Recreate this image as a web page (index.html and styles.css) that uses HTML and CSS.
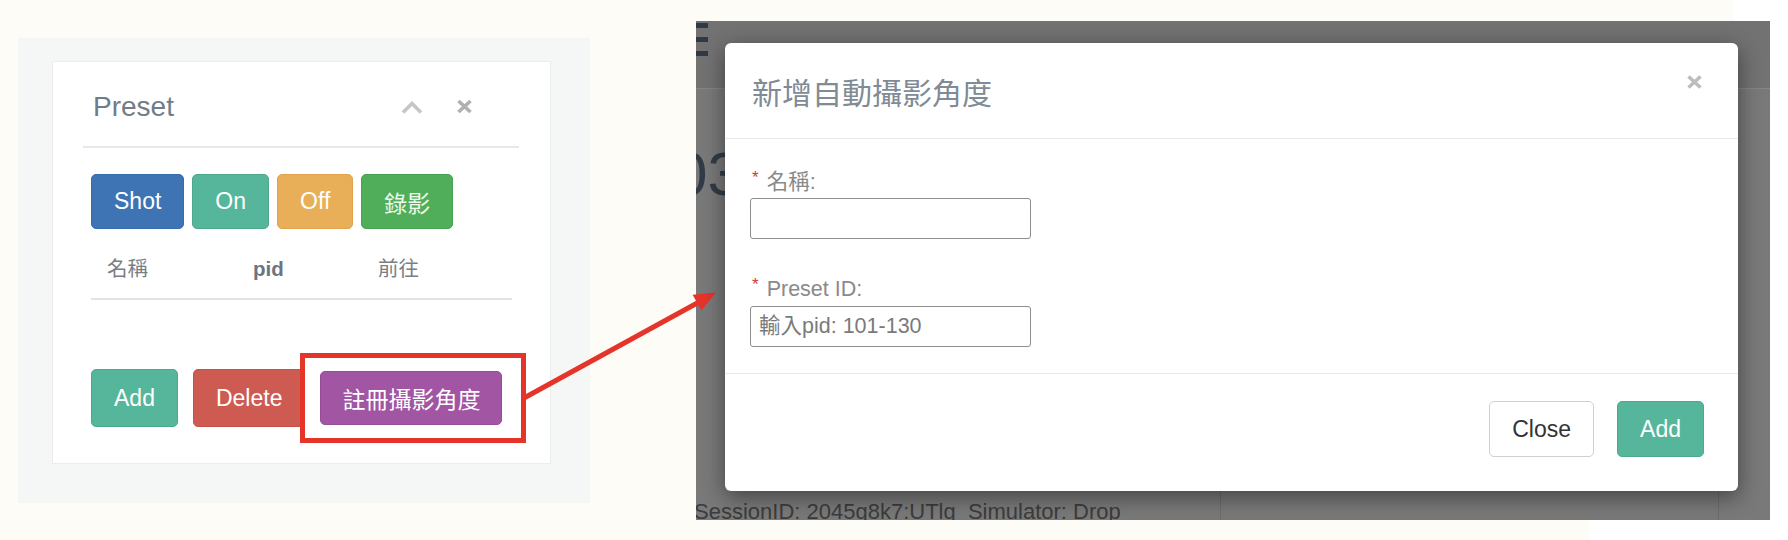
FILE: index.html
```html
<!DOCTYPE html>
<html lang="zh-Hant">
<head>
<meta charset="utf-8">
<title>Preset</title>
<link rel="stylesheet" href="styles.css">
</head>
<body>
<div class="page">
  <section class="panel">
    <div class="card">
      <div class="card-head">
        <h2 class="card-title">Preset</h2>
        <div class="card-tools">
          <svg class="ic-chev" width="22" height="13" viewBox="0 0 22 13"><polyline points="2,11.5 11,2.5 20,11.5" fill="none" stroke="#c6c6c6" stroke-width="3.6"/></svg>
          <svg class="ic-x" width="17" height="15" viewBox="0 0 17 15"><path d="M2.5 2 L14.5 13 M14.5 2 L2.5 13" fill="none" stroke="#b0b0b0" stroke-width="3.6"/></svg>
        </div>
      </div>
      <div class="card-body">
        <div class="btn-row">
          <button class="btn btn-blue">Shot</button>
          <button class="btn btn-teal">On</button>
          <button class="btn btn-orange">Off</button>
          <button class="btn btn-green">錄影</button>
        </div>
        <div class="thead">
          <span>名稱</span>
          <span class="th-bold">pid</span>
          <span>前往</span>
        </div>
        <div class="actions">
          <button class="btn btn-lg btn-teal">Add</button>
          <button class="btn btn-lg btn-red">Delete</button>
          <span class="annot"><button class="btn btn-purple">註冊攝影角度</button></span>
        </div>
      </div>
    </div>
  </section>

  <section class="shot">
    <div class="nav"><span class="burger"><i></i><i></i><i></i></span></div>
    <div class="big-num">03</div>
    <div class="under-panel"></div>
    <div class="session">SessionID: 2045g8k7:UTlg  Simulator: Drop</div>
    <div class="modal">
      <div class="modal-head">
        <h3 class="modal-title">新增自動攝影角度</h3>
        <svg class="modal-x" width="17" height="16" viewBox="0 0 17 16"><path d="M2.5 2.5 L14.5 13.5 M14.5 2.5 L2.5 13.5" fill="none" stroke="#bdbdbd" stroke-width="3.6"/></svg>
      </div>
      <div class="modal-body">
        <div class="field">
          <label class="field-label"><span class="req">*</span>名稱:</label>
          <input class="input" type="text">
        </div>
        <div class="field">
          <label class="field-label"><span class="req">*</span>Preset ID:</label>
          <input class="input" type="text" placeholder="輸入pid: 101-130">
        </div>
      </div>
      <div class="modal-foot">
        <button class="btn btn-default">Close</button>
        <button class="btn btn-teal btn-modal">Add</button>
      </div>
    </div>
  </section>
</div>

<svg class="arrow" width="1788" height="540" viewBox="0 0 1788 540">
  <line x1="524" y1="398" x2="700" y2="301.5" stroke="#e5342a" stroke-width="5"/>
  <polygon points="716,292.5 701.4,310.5 692.6,294.7" fill="#e5342a"/>
</svg>
</body>
</html>
```

FILE: styles.css
```css
html, body {
  margin: 0;
  padding: 0;
}

body {
  position: relative;
  width: 1788px;
  height: 540px;
  overflow: hidden;
  font-family: "Liberation Sans", "Noto Sans CJK TC", sans-serif;
  background:
    linear-gradient(#ffffff, #ffffff) right top / 55px 21px no-repeat,
    linear-gradient(#ffffff, #ffffff) right bottom / 198px 20px no-repeat,
    linear-gradient(#ffffff, #ffffff) right top / 18px 100% no-repeat,
    #fdfcf6;
}

.page {
  display: flex;
  align-items: flex-start;
}

/* ---------- left panel ---------- */
.panel {
  box-sizing: border-box;
  width: 572px;
  height: 465px;
  margin: 38px 0 0 18px;
  padding: 24px 40px 40px 35px;
  background: #f5f6f6;
}

.card {
  background: #ffffff;
  box-shadow: 0 0 0 1px #ececec;
  padding: 0 31px 0 30px;
}

.card-head {
  box-sizing: border-box;
  height: 86px;
  padding: 5px 46px 0 10px;
  display: flex;
  align-items: center;
  border-bottom: 2px solid #e6e8eb;
}

.card-title {
  flex: 1;
  margin: 0;
  font-size: 28px;
  font-weight: normal;
  color: #6f7c89;
}

.card-tools {
  display: flex;
  align-items: center;
  gap: 33px;
}

.ic-chev { margin-top: 2px; }

.card-body {
  padding: 0 7px 36px 8px;
}

.btn-row {
  display: flex;
  gap: 8px;
  margin-top: 26px;
}

.btn {
  display: inline-flex;
  align-items: center;
  justify-content: center;
  box-sizing: border-box;
  height: 55px;
  padding: 0 22px;
  border: 1px solid transparent;
  border-radius: 5px;
  font-family: "Liberation Sans", "Noto Sans CJK TC", sans-serif;
  font-size: 23px;
  color: #ffffff;
  white-space: nowrap;
}

.btn-blue   { background: #3e73b4; border-color: #3a6ca9; }
.btn-teal   { background: #56b69b; border-color: #4ea88e; }
.btn-orange { background: #e9ae58; border-color: #e2a34c; }
.btn-green  { background: #50ae5b; border-color: #48a253; color: #eef9ea; }
.btn-red    { background: #cd5b52; border-color: #c4524a; }
.btn-purple { background: #a155a2; border-color: #974c98; height: 54px; padding: 0 21px; }

.thead {
  display: grid;
  grid-template-columns: 146px 125px 1fr;
  margin-top: 17px;
  padding: 11px 16px 17px;
  border-bottom: 2px solid #e1e3e6;
  font-size: 20.5px;
  line-height: 24px;
  color: #7b7f85;
}

.th-bold {
  font-weight: bold;
  color: #6c7480;
}

.actions {
  display: flex;
  align-items: center;
  gap: 15px;
  margin-top: 69px;
}

.btn-lg {
  height: 58px;
  padding: 0 22px;
}

.annot {
  position: relative;
  z-index: 1;
  display: inline-flex;
}

.annot::before {
  content: "";
  position: absolute;
  top: -18px;
  left: -20px;
  right: -24px;
  bottom: -18px;
  border: 5px solid #e5342a;
  background: #ffffff;
  z-index: -1;
}

/* ---------- right screenshot ---------- */
.shot {
  position: relative;
  width: 1074px;
  height: 499px;
  margin: 21px 0 0 106px;
  overflow: hidden;
  background: #797979;
}

.nav {
  position: absolute;
  left: 0;
  top: 0;
  right: 0;
  height: 67px;
  background: #727272;
  border-bottom: 1px solid #858585;
}

.burger {
  position: absolute;
  left: -12px;
  top: 2px;
  width: 24px;
  display: flex;
  flex-direction: column;
  gap: 9.5px;
}

.burger i {
  display: block;
  height: 4.5px;
  background: #2e3a46;
}

.big-num {
  position: absolute;
  left: -23px;
  top: 122px;
  font-size: 62px;
  line-height: 62px;
  color: #323c46;
}

.under-panel {
  position: absolute;
  left: 524px;
  width: 497px;
  top: 455px;
  bottom: 0;
  border-left: 1px solid #6c6c6c;
  border-right: 1px solid #6c6c6c;
}

.session {
  position: absolute;
  left: -2px;
  top: 480px;
  font-size: 22px;
  line-height: 22px;
  color: #3c3c3c;
  white-space: pre;
}

.modal {
  position: relative;
  z-index: 1;
  width: 1013px;
  margin: 22px 0 0 29px;
  background: #ffffff;
  border-radius: 6px;
  box-shadow: 0 6px 22px rgba(0, 0, 0, 0.45);
  overflow: hidden;
}

.modal-head {
  box-sizing: border-box;
  height: 96px;
  display: flex;
  align-items: center;
  padding: 0 35px 0 27px;
  border-bottom: 1px solid #e8e8e8;
}

.modal-title {
  flex: 1;
  margin: 0;
  font-size: 30px;
  font-weight: normal;
  color: #808b96;
}

.modal-x {
  align-self: flex-start;
  margin-top: 31px;
}

.modal-body {
  padding: 30px 27px 26px 25px;
  border-bottom: 1px solid #e8e8e8;
}

.field + .field {
  margin-top: 37px;
}

.field-label {
  display: block;
  height: 26px;
  margin: 0 0 3px 2px;
  font-size: 21.5px;
  line-height: 26px;
  color: #8a8a8a;
}

.field + .field .field-label {
  margin-bottom: 4px;
}

.req {
  display: inline-block;
  margin-right: 8px;
  font-size: 17px;
  line-height: 18px;
  vertical-align: top;
  color: #cc3b34;
}

.input {
  display: block;
  box-sizing: border-box;
  width: 281px;
  height: 41px;
  margin: 0;
  padding: 0 8px;
  border: 1px solid #8e8e8e;
  border-radius: 3px;
  font-family: "Liberation Sans", "Noto Sans CJK TC", sans-serif;
  font-size: 21.5px;
  color: #555555;
  background: #ffffff;
}

.input::placeholder {
  color: #7a7a7a;
  opacity: 1;
}

.modal-foot {
  display: flex;
  justify-content: flex-end;
  gap: 23px;
  padding: 27px 34px 34px;
}

.btn-default {
  height: 56px;
  padding: 0 22px;
  background: #ffffff;
  border-color: #d0d0d0;
  color: #333333;
}

.btn-modal {
  height: 56px;
  padding: 0 22px;
}

/* ---------- annotation arrow ---------- */
.arrow {
  position: absolute;
  left: 0;
  top: 0;
  pointer-events: none;
}
```
